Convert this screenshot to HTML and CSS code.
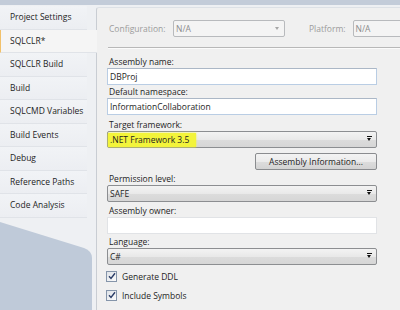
FILE: index.html
```html
<!DOCTYPE html>
<html lang="en">
<head>
    <meta charset="UTF-8">
    <title>SQLCLR properties</title>
    <link rel="stylesheet" href="styles.css">
</head>
<body>
    <div class="topbar"></div>
    <div class="main">
        <div class="sidebar">
            <ul class="tabs">
                <li class="tab">Project Settings</li>
                <li class="tab active">SQLCLR*</li>
                <li class="tab">SQLCLR Build</li>
                <li class="tab">Build</li>
                <li class="tab">SQLCMD Variables</li>
                <li class="tab">Build Events</li>
                <li class="tab">Debug</li>
                <li class="tab">Reference Paths</li>
                <li class="tab">Code Analysis</li>
            </ul>
            <div class="tabs-foot">
                <svg width="93" height="100" viewBox="0 0 93 100">
                    <path d="M0 4 L84 30 Q92 33 92 40 L92 100 L0 100 Z" fill="#bfcad9"/>
                </svg>
            </div>
        </div>
        <div class="panel">
            <div class="config-row">
                <span class="config-label">Configuration:</span>
                <div class="combo disabled config-combo">N/A<span class="arrow"></span></div>
                <span class="config-label platform-label">Platform:</span>
                <div class="combo disabled platform-combo">N/A</div>
            </div>
            <div class="separator"></div>

            <div class="form">
                <label class="field-label first">Assembly name:</label>
                <div class="textbox">DBProj</div>

                <label class="field-label">Default namespace:</label>
                <div class="textbox">InformationCollaboration</div>

                <label class="field-label gap3">Target framework:</label>
                <div class="combo"><span class="highlight">.NET Framework 3.5</span><span class="arrow"></span></div>

                <div class="button-row">
                    <button class="btn">Assembly Information...</button>
                </div>

                <label class="field-label gap2">Permission level:</label>
                <div class="combo">SAFE<span class="arrow"></span></div>

                <label class="field-label gap2">Assembly owner:</label>
                <div class="textbox empty"></div>

                <label class="field-label gap1">Language:</label>
                <div class="combo">C#<span class="arrow"></span></div>

                <div class="check-row first-check">
                    <span class="checkbox">
                        <svg width="8" height="8" viewBox="0 0 8 8"><path d="M1 4.2 L3 6.4 L7 1.2" fill="none" stroke="#2c3e68" stroke-width="1.4"/></svg>
                    </span>
                    Generate DDL
                </div>
                <div class="check-row">
                    <span class="checkbox">
                        <svg width="8" height="8" viewBox="0 0 8 8"><path d="M1 4.2 L3 6.4 L7 1.2" fill="none" stroke="#2c3e68" stroke-width="1.4"/></svg>
                    </span>
                    Include Symbols
                </div>
            </div>
        </div>
    </div>
</body>
</html>
```

FILE: styles.css
```css
html, body {
    margin: 0;
    height: 100%;
}
body {
    font-family: "Open Sans", "Liberation Sans", sans-serif;
    font-size: 8.5px;
    color: #1e1e1e;
    background-color: #eef0f3;
    overflow: hidden;
}
.topbar {
    height: 5px;
    background-color: #c3ccd9;
}
.main {
    display: flex;
    height: 305px;
}
.sidebar {
    width: 93px;
    display: flex;
    flex-direction: column;
    padding-top: 1px;
}
.tabs {
    list-style: none;
    margin: 0;
    padding: 0;
}
.tab {
    height: 22.5px;
    line-height: 22.5px;
    padding-left: 10px;
    border-bottom: 1px solid #e0e3e8;
    margin-right: 6px;
    background: linear-gradient(#f1f3f6, #eceef2);
}
.tab.active {
    background: #f5f5f5;
    border-left: 1px solid #f2c16a;
    padding-left: 9px;
    margin-right: -4px;
    position: relative;
    z-index: 1;
}
.tabs-foot {
    flex: 1;
}
.tabs-foot svg {
    display: block;
}
.panel {
    flex: 1;
    min-width: 0;
    overflow: hidden;
    margin-top: 2px;
    margin-left: 3px;
    background-color: #f0f0f0;
    border-left: 1px solid #c9cdd3;
    border-top: 1px solid #dde1e6;
    border-top-left-radius: 3px;
    padding: 12px 0 0 10px;
}
.config-row {
    display: flex;
    align-items: center;
    height: 17px;
    white-space: nowrap;
}
.config-row > * {
    flex: none;
}
.config-label {
    color: #9c9c9c;
    padding-left: 2px;
    width: 64px;
}
.platform-label {
    width: auto;
    margin: 0 7px 0 22px;
}
.combo {
    position: relative;
    box-sizing: border-box;
    height: 17px;
    line-height: 15px;
    width: 270px;
    padding-left: 2px;
    border: 1px solid #8c8e91;
    border-radius: 2px;
    background: linear-gradient(#f3f3f3, #e9e9e9 50%, #dcdcdc 51%, #d6d6d6);
    white-space: nowrap;
}
.combo.disabled {
    color: #8c8c8c;
    border-color: #b8babd;
    background: #f4f4f4;
}
.config-combo {
    width: 112px;
}
.platform-combo {
    width: 80px;
}
.arrow {
    position: absolute;
    right: 5px;
    top: 6px;
    width: 0;
    height: 0;
    border-left: 2.5px solid transparent;
    border-right: 2.5px solid transparent;
    border-top: 3px solid #111;
}
.arrow::before {
    content: "";
    position: absolute;
    left: -2.5px;
    top: -5px;
    width: 5px;
    height: 1px;
    background: #111;
}
.combo.disabled .arrow {
    border-top-color: #a6a6a6;
}
.combo.disabled .arrow::before {
    display: none;
}
.separator {
    margin: 10px 0 0 1px;
    height: 1px;
    background: #b8b8b8;
    border-bottom: 1px solid #fbfbfb;
}
.form {
    display: flex;
    flex-direction: column;
    width: 270px;
}
.field-label {
    display: block;
    height: 13px;
    line-height: 13px;
    padding-left: 2px;
}
.field-label.first {
    margin-top: 6px;
}
.gap1 { margin-top: 1px; }
.gap2 { margin-top: 2px; }
.gap3 { margin-top: 3px; }
.textbox {
    box-sizing: border-box;
    height: 17px;
    line-height: 15px;
    padding-left: 2px;
    background: #fff;
    border: 1px solid #b9cde4;
    border-top-color: #abb7c6;
}
.textbox.empty {
    border-color: #e1e3e6;
}
.highlight {
    display: inline-block;
    height: 14px;
    line-height: 14px;
    margin-left: -2px;
    padding: 0 7px 0 2px;
    background: #f3f43a;
    box-shadow: 0 0 2px #f3f43a;
}
.button-row {
    display: flex;
    justify-content: flex-end;
    margin-top: 5px;
}
.btn {
    font: inherit;
    color: #1e1e1e;
    box-sizing: border-box;
    width: 122px;
    height: 17px;
    padding: 0;
    border: 1px solid #8a8c8f;
    border-radius: 2px;
    background: linear-gradient(#f3f3f3, #ebebeb 50%, #dddddd 51%, #d3d3d3);
}
.check-row {
    display: flex;
    align-items: center;
    height: 12px;
    margin-top: 7px;
}
.check-row.first-check {
    margin-top: 5px;
}
.checkbox {
    box-sizing: border-box;
    width: 11px;
    height: 11px;
    margin-left: -1px;
    margin-right: 5px;
    border: 1px solid #8595aa;
    background: linear-gradient(135deg, #dfe3e8, #fbfbfb);
    display: flex;
    align-items: center;
    justify-content: center;
}
.checkbox svg {
    display: block;
}
```
